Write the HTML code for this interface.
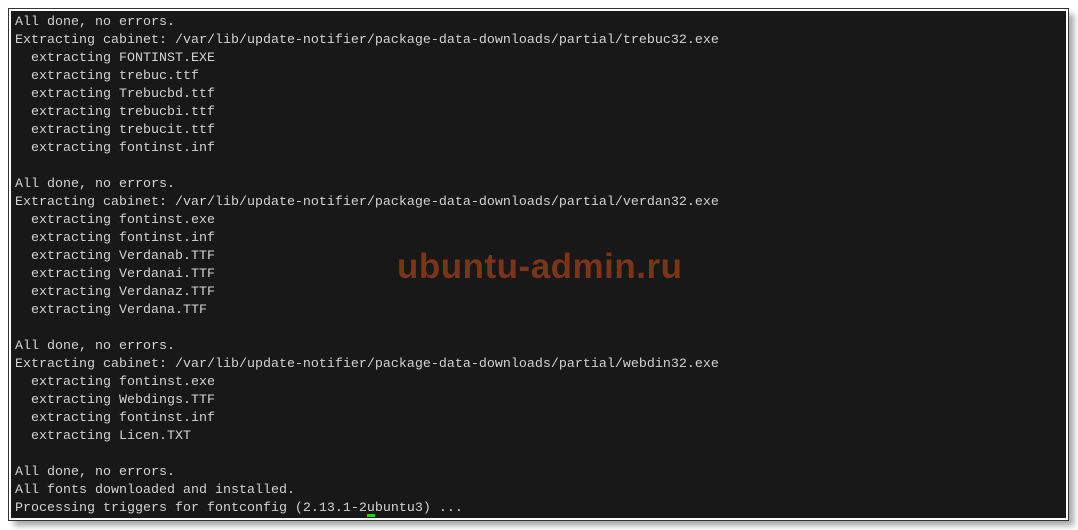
<!DOCTYPE html>
<html><head><meta charset="utf-8"><style>
html,body{margin:0;padding:0;background:#fff;width:1078px;height:530px;overflow:hidden;position:relative}
.shadow{position:absolute;left:14px;top:14px;width:1060px;height:512px;background:#888;filter:blur(3px);opacity:.7}
.term{position:absolute;left:9px;top:9px;width:1055px;height:507px;background:#181818;border:2px solid #fff;outline:1px solid #333}
pre{margin:0;position:absolute;left:4px;top:3px;font-family:"Liberation Mono",monospace;font-size:13.33px;line-height:18px;color:#d2d2d2}
.wm{position:absolute;left:386px;top:236px;font-family:"Liberation Sans",sans-serif;font-weight:bold;font-size:35px;color:#7a3418;letter-spacing:0.5px}
.cur{position:absolute;left:356px;top:503px;width:8px;height:3px;background:#00e000}
</style></head><body>
<div class="shadow"></div>
<div class="term">
<pre>All done, no errors.
Extracting cabinet: /var/lib/update-notifier/package-data-downloads/partial/trebuc32.exe
  extracting FONTINST.EXE
  extracting trebuc.ttf
  extracting Trebucbd.ttf
  extracting trebucbi.ttf
  extracting trebucit.ttf
  extracting fontinst.inf

All done, no errors.
Extracting cabinet: /var/lib/update-notifier/package-data-downloads/partial/verdan32.exe
  extracting fontinst.exe
  extracting fontinst.inf
  extracting Verdanab.TTF
  extracting Verdanai.TTF
  extracting Verdanaz.TTF
  extracting Verdana.TTF

All done, no errors.
Extracting cabinet: /var/lib/update-notifier/package-data-downloads/partial/webdin32.exe
  extracting fontinst.exe
  extracting Webdings.TTF
  extracting fontinst.inf
  extracting Licen.TXT

All done, no errors.
All fonts downloaded and installed.
Processing triggers for fontconfig (2.13.1-2ubuntu3) ...</pre>
<div class="wm">ubuntu-admin.ru</div>
<div class="cur"></div>
</div>
</body></html>
